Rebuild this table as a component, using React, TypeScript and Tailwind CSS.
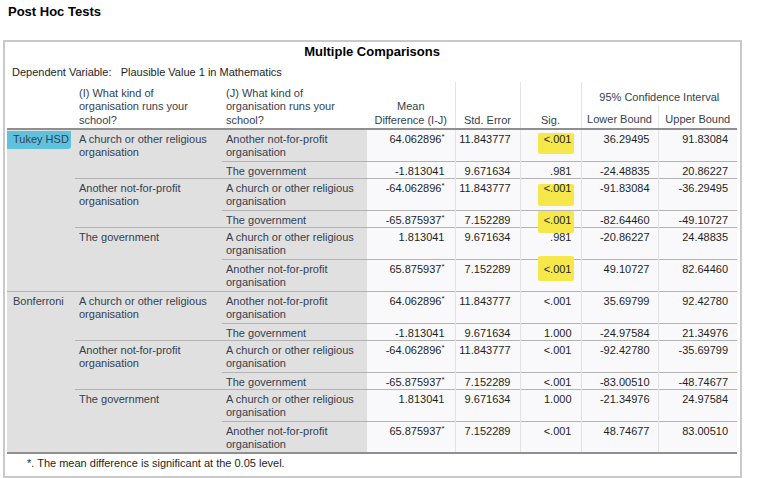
import React from 'react'

type Row = {
    j: string[];
    md: string;
    star?: boolean;
    se: string;
    p: string;
    lo: string;
    hi: string;
    hl?: string;
};

type Group = { i: string[]; rows: Row[] };

const church = ['A church or other religious', 'organisation'];
const another = ['Another not-for-profit', 'organisation'];
const gov = ['The government'];

const tukey: Group[] = [
    {
        i: church,
        rows: [
            { j: another, md: '64.062896', star: true, se: '11.843777', p: '<.001', lo: '36.29495', hi: '91.83084', hl: 'top-0 -bottom-[8px]' },
            { j: gov, md: '-1.813041', se: '9.671634', p: '.981', lo: '-24.48835', hi: '20.86227' },
        ],
    },
    {
        i: another,
        rows: [
            { j: church, md: '-64.062896', star: true, se: '11.843777', p: '<.001', lo: '-91.83084', hi: '-36.29495', hl: 'top-[2px] -bottom-[11px]' },
            { j: gov, md: '-65.875937', star: true, se: '7.152289', p: '<.001', lo: '-82.64460', hi: '-49.10727', hl: '-top-[3px] -bottom-[6px]' },
        ],
    },
    {
        i: gov,
        rows: [
            { j: church, md: '1.813041', se: '9.671634', p: '.981', lo: '-20.86227', hi: '24.48835' },
            { j: another, md: '65.875937', star: true, se: '7.152289', p: '<.001', lo: '49.10727', hi: '82.64460', hl: '-top-[7px] -bottom-[5px]' },
        ],
    },
];

const bonferroni: Group[] = [
    {
        i: church,
        rows: [
            { j: another, md: '64.062896', star: true, se: '11.843777', p: '<.001', lo: '35.69799', hi: '92.42780' },
            { j: gov, md: '-1.813041', se: '9.671634', p: '1.000', lo: '-24.97584', hi: '21.34976' },
        ],
    },
    {
        i: another,
        rows: [
            { j: church, md: '-64.062896', star: true, se: '11.843777', p: '<.001', lo: '-92.42780', hi: '-35.69799' },
            { j: gov, md: '-65.875937', star: true, se: '7.152289', p: '<.001', lo: '-83.00510', hi: '-48.74677' },
        ],
    },
    {
        i: gov,
        rows: [
            { j: church, md: '1.813041', se: '9.671634', p: '1.000', lo: '-21.34976', hi: '24.97584' },
            { j: another, md: '65.875937', star: true, se: '7.152289', p: '<.001', lo: '48.74677', hi: '83.00510' },
        ],
    },
];

const tests = [
    { name: 'Tukey HSD', mark: true, groups: tukey },
    { name: 'Bonferroni', mark: false, groups: bonferroni },
];

function Lines({ lines }: { lines: string[] }) {
    return (
        <>
            {lines.map((l, k) => (
                <div key={k}>{l}</div>
            ))}
        </>
    );
}

export default function App() {
    const label = 'bg-[#e0e0e0] text-[#34414f] align-top pt-[3px] pl-[4px]';
    const num = 'bg-[#f9f9fb] text-[#1e1e1e] align-top pt-[3px] text-right';
    const line = 'border-t border-[#b3b3b3]';

    return (
        <div
            className="w-[764px] h-[478px] bg-white overflow-hidden text-[11px] leading-[13px]"
            style={{ fontFamily: '"Liberation Sans", Arial, sans-serif' }}
        >
            <div className="h-[40px] pt-[4px] pl-[8px] text-[13px] leading-[16px] font-bold text-black">
                Post Hoc Tests
            </div>

            <div className="ml-[3px] w-[739px] h-[438px] border-2 border-[#c9c9c9] pl-[2px]">
                <table className="table-fixed border-collapse w-[730px]">
                    <colgroup>
                        <col className="w-[68px]" />
                        <col className="w-[147px]" />
                        <col className="w-[145px]" />
                        <col className="w-[88px]" />
                        <col className="w-[65px]" />
                        <col className="w-[61px]" />
                        <col className="w-[77px]" />
                        <col className="w-[79px]" />
                    </colgroup>
                    <thead>
                        <tr className="h-[20px]">
                            <th colSpan={8} className="text-center text-[13px] leading-[20px] font-bold text-black">
                                Multiple Comparisons
                            </th>
                        </tr>
                        <tr className="h-[20px]">
                            <th colSpan={8} className="text-left font-normal pl-[5px] text-[#1e1e1e] whitespace-pre">
                                {'Dependent Variable:   Plausible Value 1 in Mathematics'}
                            </th>
                        </tr>
                        <tr className="h-[23px] font-normal text-[#34414f] leading-[13.5px]">
                            <th rowSpan={2} />
                            <th rowSpan={2} className="font-normal text-left align-bottom pl-[4px] pb-[1px]">
                                <Lines lines={['(I) What kind of', 'organisation runs your', 'school?']} />
                            </th>
                            <th rowSpan={2} className="font-normal text-left align-bottom pl-[4px] pb-[1px]">
                                <Lines lines={['(J) What kind of', 'organisation runs your', 'school?']} />
                            </th>
                            <th rowSpan={2} className="font-normal text-center align-bottom pb-[1px]">
                                <Lines lines={['Mean', 'Difference (I-J)']} />
                            </th>
                            <th rowSpan={2} className="font-normal text-center align-bottom pb-[1px] border-l border-[#e3e3e3]">
                                Std. Error
                            </th>
                            <th rowSpan={2} className="font-normal text-center align-bottom pb-[1px] border-l border-[#e3e3e3]">
                                Sig.
                            </th>
                            <th colSpan={2} className="font-normal text-center align-bottom pb-[1px] border-l border-[#e3e3e3]">
                                95% Confidence Interval
                            </th>
                        </tr>
                        <tr className="h-[24px] text-[#34414f] border-b-2 border-[#8f8f8f]">
                            <th className="font-normal text-center align-bottom pb-[2px] border-l border-[#e3e3e3]">
                                Lower Bound
                            </th>
                            <th className="font-normal text-center align-bottom pb-[2px] border-l border-[#e3e3e3]">
                                Upper Bound
                            </th>
                        </tr>
                    </thead>
                    <tbody className="border-b-2 border-[#8f8f8f]">
                        {tests.map((t, ti) =>
                            t.groups.map((g, gi) =>
                                g.rows.map((r, ri) => (
                                    <tr key={`${ti}-${gi}-${ri}`} className={r.j.length > 1 ? 'h-[32px]' : 'h-[17px]'}>
                                        {gi === 0 && ri === 0 && (
                                            <td rowSpan={6} className={`${label} pl-[6px] ${ti > 0 ? line : ''}`}>
                                                {t.mark ? (
                                                    <span className="relative inline-block">
                                                        <span className="absolute -left-[6px] -right-[2px] -top-[2px] -bottom-[3px] bg-[#5ec2de] rounded-br-[3px]" />
                                                        <span className="relative">{t.name}</span>
                                                    </span>
                                                ) : (
                                                    t.name
                                                )}
                                            </td>
                                        )}
                                        {ri === 0 && (
                                            <td rowSpan={g.rows.length} className={`${label} ${ti + gi > 0 ? line : ''}`}>
                                                <Lines lines={g.i} />
                                            </td>
                                        )}
                                        <td className={`${label} ${ti + gi + ri > 0 ? line : ''}`}>
                                            <Lines lines={r.j} />
                                        </td>
                                        <td className={`${num} pr-[10px] ${ti + gi + ri > 0 ? line : ''}`}>
                                            {r.md}
                                            {r.star && (
                                                <span className="relative -top-[4px] text-[8px] leading-none">*</span>
                                            )}
                                        </td>
                                        <td className={`${num} pr-[9px] border-l border-l-[#e3e3e3] ${ti + gi + ri > 0 ? line : ''}`}>
                                            {r.se}
                                        </td>
                                        <td className={`${num} pr-[9px] border-l border-l-[#e3e3e3] ${ti + gi + ri > 0 ? line : ''}`}>
                                            {r.hl ? (
                                                <span className="relative inline-block">
                                                    <span className={`absolute -left-[6px] -right-[2px] ${r.hl} bg-[#f6e84a] rounded-[2px]`} />
                                                    <span className="relative">{r.p}</span>
                                                </span>
                                            ) : (
                                                r.p
                                            )}
                                        </td>
                                        <td className={`${num} pr-[8px] border-l border-l-[#e3e3e3] ${ti + gi + ri > 0 ? line : ''}`}>
                                            {r.lo}
                                        </td>
                                        <td className={`${num} pr-[9px] border-l border-l-[#e3e3e3] ${ti + gi + ri > 0 ? line : ''}`}>
                                            {r.hi}
                                        </td>
                                    </tr>
                                ))
                            )
                        )}
                    </tbody>
                </table>
                <div className="pl-[20px] pt-[3px] text-[#1e1e1e]">
                    *. The mean difference is significant at the 0.05 level.
                </div>
            </div>
        </div>
    );
}
